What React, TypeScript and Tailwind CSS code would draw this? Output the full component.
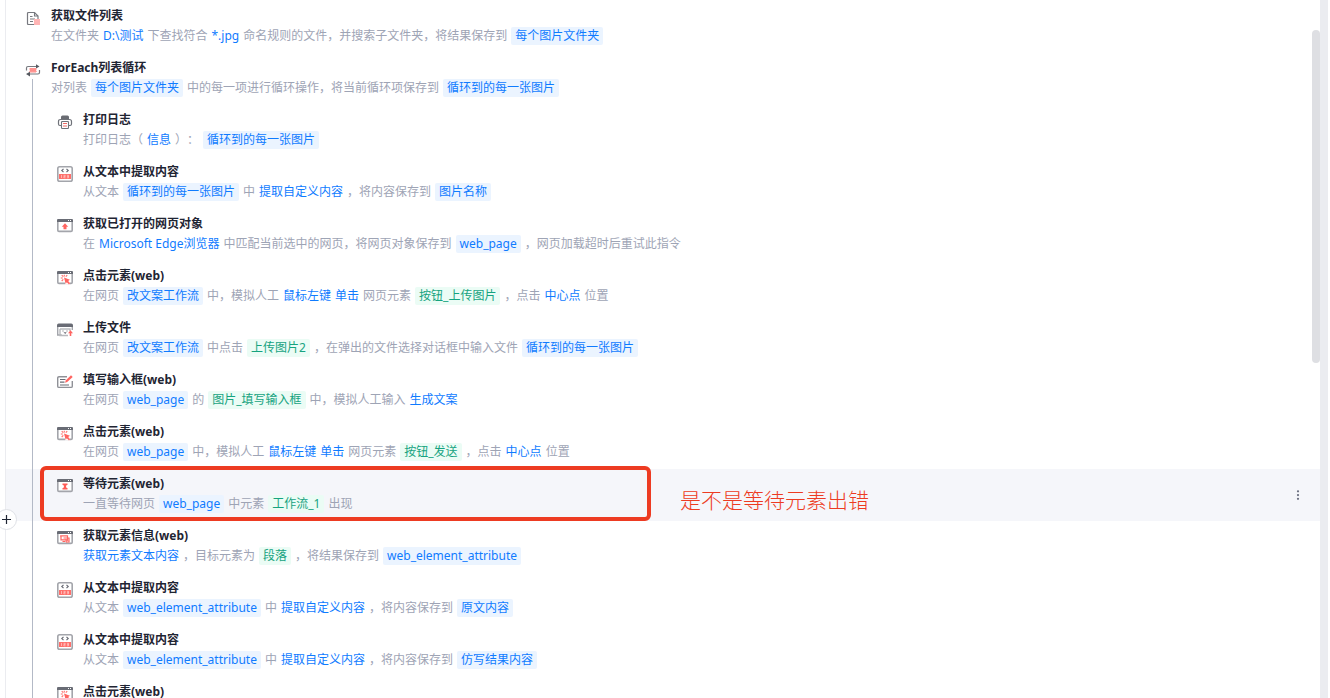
import type { ReactNode } from 'react';
import { BsThreeDotsVertical } from 'react-icons/bs';

type IconName =
	| 'file'
	| 'loop'
	| 'print'
	| 'extract'
	| 'page'
	| 'click'
	| 'upload'
	| 'input'
	| 'wait'
	| 'info';

type PartKind = 'text' | 'link' | 'variable' | 'element';

interface Step {
	icon: IconName;
	title: string;
	parts: [PartKind, string][];
	active?: boolean;
}

const outerSteps: Step[] = [
	{
		icon: 'file',
		title: '获取文件列表',
		parts: [
			['text', '在文件夹'],
			['link', 'D:\\测试'],
			['text', '下查找符合'],
			['link', '*.jpg'],
			['text', '命名规则的文件，并搜索子文件夹，将结果保存到'],
			['variable', '每个图片文件夹'],
		],
	},
	{
		icon: 'loop',
		title: 'ForEach列表循环',
		parts: [
			['text', '对列表'],
			['variable', '每个图片文件夹'],
			['text', '中的每一项进行循环操作，将当前循环项保存到'],
			['variable', '循环到的每一张图片'],
		],
	},
];

const innerSteps: Step[] = [
	{
		icon: 'print',
		title: '打印日志',
		parts: [
			['text', '打印日志（'],
			['link', '信息'],
			['text', '）：'],
			['variable', '循环到的每一张图片'],
		],
	},
	{
		icon: 'extract',
		title: '从文本中提取内容',
		parts: [
			['text', '从文本'],
			['variable', '循环到的每一张图片'],
			['text', '中'],
			['link', '提取自定义内容'],
			['text', '，将内容保存到'],
			['variable', '图片名称'],
		],
	},
	{
		icon: 'page',
		title: '获取已打开的网页对象',
		parts: [
			['text', '在'],
			['link', 'Microsoft Edge浏览器'],
			['text', '中匹配当前选中的网页，将网页对象保存到'],
			['variable', 'web_page'],
			['text', '，网页加载超时后重试此指令'],
		],
	},
	{
		icon: 'click',
		title: '点击元素(web)',
		parts: [
			['text', '在网页'],
			['variable', '改文案工作流'],
			['text', '中，模拟人工'],
			['link', '鼠标左键'],
			['link', '单击'],
			['text', '网页元素'],
			['element', '按钮_上传图片'],
			['text', '，点击'],
			['link', '中心点'],
			['text', '位置'],
		],
	},
	{
		icon: 'upload',
		title: '上传文件',
		parts: [
			['text', '在网页'],
			['variable', '改文案工作流'],
			['text', '中点击'],
			['element', '上传图片2'],
			['text', '，在弹出的文件选择对话框中输入文件'],
			['variable', '循环到的每一张图片'],
		],
	},
	{
		icon: 'input',
		title: '填写输入框(web)',
		parts: [
			['text', '在网页'],
			['variable', 'web_page'],
			['text', '的'],
			['element', '图片_填写输入框'],
			['text', '中，模拟人工输入'],
			['link', '生成文案'],
		],
	},
	{
		icon: 'click',
		title: '点击元素(web)',
		parts: [
			['text', '在网页'],
			['variable', 'web_page'],
			['text', '中，模拟人工'],
			['link', '鼠标左键'],
			['link', '单击'],
			['text', '网页元素'],
			['element', '按钮_发送'],
			['text', '，点击'],
			['link', '中心点'],
			['text', '位置'],
		],
	},
	{
		icon: 'wait',
		title: '等待元素(web)',
		active: true,
		parts: [
			['text', '一直等待网页'],
			['variable', 'web_page'],
			['text', '中元素'],
			['element', '工作流_1'],
			['text', '出现'],
		],
	},
	{
		icon: 'info',
		title: '获取元素信息(web)',
		parts: [
			['link', '获取元素文本内容'],
			['text', '，目标元素为'],
			['element', '段落'],
			['text', '，将结果保存到'],
			['variable', 'web_element_attribute'],
		],
	},
	{
		icon: 'extract',
		title: '从文本中提取内容',
		parts: [
			['text', '从文本'],
			['variable', 'web_element_attribute'],
			['text', '中'],
			['link', '提取自定义内容'],
			['text', '，将内容保存到'],
			['variable', '原文内容'],
		],
	},
	{
		icon: 'extract',
		title: '从文本中提取内容',
		parts: [
			['text', '从文本'],
			['variable', 'web_element_attribute'],
			['text', '中'],
			['link', '提取自定义内容'],
			['text', '，将内容保存到'],
			['variable', '仿写结果内容'],
		],
	},
	{
		icon: 'click',
		title: '点击元素(web)',
		parts: [],
	},
];

const partStyles: Record<PartKind, string> = {
	text: 'text-[#9ea4b5]',
	link: 'text-[#0f7bff]',
	variable: 'rounded-xs bg-[#ebf4ff] px-1 text-[#0f7bff]',
	element: 'rounded-xs bg-[#ebfcf5] px-1 text-[#16a37f]',
};

// Browser window frame shared by the web icons
const WindowFrame = ({ children }: { children: ReactNode }) => (
	<>
		<rect x="0.8" y="1.8" width="14.4" height="11.6" rx="1.2" fill="#fff" stroke="#a3a5ab" strokeWidth="1.6" />
		<path d="M0 2.2Q0 1 1.200 1h13.600Q16 1 16 2.200V4H0z" fill="#696c75" />
		<path d="M11 2h1v1h-1zM13 2h1v1h-1z" fill="#fff" />
		{children}
	</>
);

const icons: Record<IconName, ReactNode> = {
	file: (
		<>
			<path d="M9 14.500H3.500Q2.500 14.500 2.500 13.500V3.500Q2.500 2.500 3.500 2.500H9.500L13 6V9" fill="none" stroke="#77797f" strokeWidth="1.200" />
			<path d="M9.500 2.500V6H13M5 6.500h2.500M5 9h5M5 11.500h3" fill="none" stroke="#77797f" strokeWidth="1.100" />
			<rect x="9" y="9" width="6" height="6" fill="#ffb5b5" />
		</>
	),
	loop: (
		<>
			<path d="M1.500 8.500V6Q1.500 4.500 3 4.500H12M14.500 8v2.500Q14.500 12 13 12H4" fill="none" stroke="#77797f" strokeWidth="1.200" />
			<path d="M11 2.200 14.500 4.500 11 6.500zM5 9.800 1 12l4 2.500z" fill="#55585f" />
			<rect x="5" y="6" width="6" height="4.500" fill="#ff8b87" />
			<path d="M4 7h8M4 9.300h8" stroke="#ff9c99" />
		</>
	),
	print: (
		<>
			<path d="M4 3Q4 1.500 5.500 1.500h5Q12 1.500 12 3v2H4z" fill="#6a6c73" />
			<path d="M4.500 11.500H3Q1.500 11.500 1.500 10V7.500Q1.500 5.500 3.500 5.500h9q2 0 2 2V10q0 1.500-1.500 1.500h-1.500" fill="none" stroke="#6f7279" strokeWidth="1.200" />
			<rect x="4.500" y="7.500" width="7" height="7" rx="0.800" fill="#fff" stroke="#6f7279" strokeWidth="1.100" />
			<path d="M6 9.500h4M6 12h4" stroke="#f06b66" />
		</>
	),
	extract: (
		<>
			<rect x="0.800" y="0.800" width="14.400" height="14.400" rx="1.800" fill="#fff" stroke="#a3a5ab" strokeWidth="1.600" />
			<path d="M6.500 2.800 4.800 4.500 6.500 6.200M9.500 2.800l1.700 1.700L9.500 6.200" fill="none" stroke="#696c75" strokeWidth="1.200" />
			<path d="M2 8h12v5H2z" fill="#ff6f6b" />
			<path d="M4.500 9v3M6.500 9.300h1.700v1.200H6.800v1.300h1.700M10 9.300h1.500v2.500H10M10 10.600h1.500" fill="none" stroke="#ffd2d0" strokeWidth="0.700" />
		</>
	),
	page: (
		<WindowFrame>
			<path d="M8 5.200 11.200 8.700H9.500v2.500H6.500V8.700H4.800z" fill="#ff6561" />
		</WindowFrame>
	),
	click: (
		<WindowFrame>
			<path d="M8 12h5v2.500H8z" fill="#fff" />
			<path d="m7 7.500 6 2.200-1.900 1.300 2.100 2.200-1.200 1.200-2.200-2.200-1.100 1.700z" fill="#ff6561" />
			<path d="M7.300 4.800v1.800M3.800 8h2M4.700 5.200l1.600 1.500M10.200 5.200 8.800 6.700M4.700 11l1.600-1.700" stroke="#ff6f6b" strokeWidth="1.100" />
		</WindowFrame>
	),
	upload: (
		<>
			<path d="M0 3.200Q0 1.500 1.700 1.500h12.600Q16 1.500 16 3.200V5H0z" fill="#696c75" />
			<path d="M0.700 5v8h4M15.300 5v3" fill="none" stroke="#a3a5ab" strokeWidth="1.400" />
			<path d="M3 7h10v2M3 7v6.500h8" fill="none" stroke="#b7b9bd" strokeWidth="1.400" />
			<path d="M5.500 8.500h1v1h-1zM9.500 8.500h1v1h-1zM6.500 10.300h3.200L8.200 12z" fill="#696c75" />
			<path d="m13.500 8.200 2.500 3h-1.700V14h-1.600v-2.800H11z" fill="#ff6561" />
		</>
	),
	input: (
		<>
			<path d="M10 2.700H2Q0.700 2.700 0.700 4v8.200q0 1.200 1.300 1.200h12q1.300 0 1.300-1.200V7" fill="none" stroke="#8f9197" strokeWidth="1.400" />
			<path d="M3 5.500h5.500M3 8.200h4.500M3 11h9" stroke="#696c75" strokeWidth="1.200" />
			<path d="m14 1.200 1.700 1.700-5.500 5.200-2.200.6.700-2.200z" fill="#ff6561" />
		</>
	),
	wait: (
		<WindowFrame>
			<path d="M5.500 5.500h5V7H9.600L9 8.500l.6 1.500h.9v1.500h-5V10h.9L7 8.500 6.400 7h-.9z" fill="#ff5c58" />
		</WindowFrame>
	),
	info: (
		<WindowFrame>
			<path d="M4 5.800h6.500v4H4zM6.500 8H12v4H9M3 6h2M5.500 11.500h3" fill="none" stroke="#ff6561" strokeWidth="1.200" />
			<path d="m8 8.700 4 1.500-2 1-.8 1.800z" fill="#ff7773" />
		</WindowFrame>
	),
};

const StepRow = ({ step, nested }: { step: Step; nested?: boolean }) => (
	<li
		className={`relative flex h-13 items-start pr-4 ${nested ? 'pl-[51px]' : 'pl-[19px]'} ${
			step.active ? 'bg-[#f5f6fa]' : ''
		}`}
	>
		<svg viewBox="0 0 16 16" className="mt-[9px] mr-[10px] size-4 shrink-0" aria-hidden="true">
			{icons[step.icon]}
		</svg>
		<div className="min-w-0 flex-1 pt-[5px]">
			<h3 className="text-xs leading-5 font-bold text-[#1f2533]">{step.title}</h3>
			<p className="flex items-center gap-1 pt-px text-xs leading-[18px] whitespace-nowrap [text-spacing-trim:space-all]">
				{step.parts.map(([kind, text], index) => (
					<span key={index} className={partStyles[kind]}>
						{text}
					</span>
				))}
			</p>
		</div>
		{step.active && (
			<>
				<button type="button" aria-label="更多" className="self-center text-[#6b7080]">
					<BsThreeDotsVertical className="size-3" />
				</button>
				<button
					type="button"
					aria-label="添加"
					className="absolute -bottom-[9px] -left-[10px] z-10 flex size-[21px] items-center justify-center rounded-full border border-[#dfe1e6] bg-white"
				>
					<svg viewBox="0 0 9 9" className="size-[9px]">
						<path d="M4.500 0v9M0 4.500h9" stroke="#1f2533" strokeWidth="1.200" />
					</svg>
				</button>
				<div className="pointer-events-none absolute -top-[3px] bottom-0 left-[34px] w-[611px] rounded-md border-4 border-[#ed3b22]" />
				<p className="absolute top-4 left-[674px] text-[21px] leading-[30px] font-light whitespace-nowrap text-[#ed3b22]">
					是不是等待元素出错
				</p>
			</>
		)}
	</li>
);

const App = () => {
	return (
		<div className="flex h-screen overflow-hidden bg-white font-['Noto_Sans','Noto_Sans_CJK_SC',sans-serif]">
			<main className="relative ml-[5px] min-w-0 flex-1 border-l border-[#ebecf0] pt-px">
				<ul>
					{outerSteps.map((step) => (
						<StepRow key={step.title} step={step} />
					))}
				</ul>
				<ul className="relative">
					{innerSteps.map((step, index) => (
						<StepRow key={index} step={step} nested />
					))}
					<li aria-hidden="true" className="absolute -top-[26px] bottom-0 left-[26px] w-px bg-[#b3b9c6]" />
				</ul>
				<div className="absolute top-[30px] right-0 h-[333px] w-2 rounded-full bg-[#dedfe3]" />
			</main>
			<div className="mr-[2px] w-2 shrink-0 bg-[#ebecf0]" />
		</div>
	);
};

export default App;
